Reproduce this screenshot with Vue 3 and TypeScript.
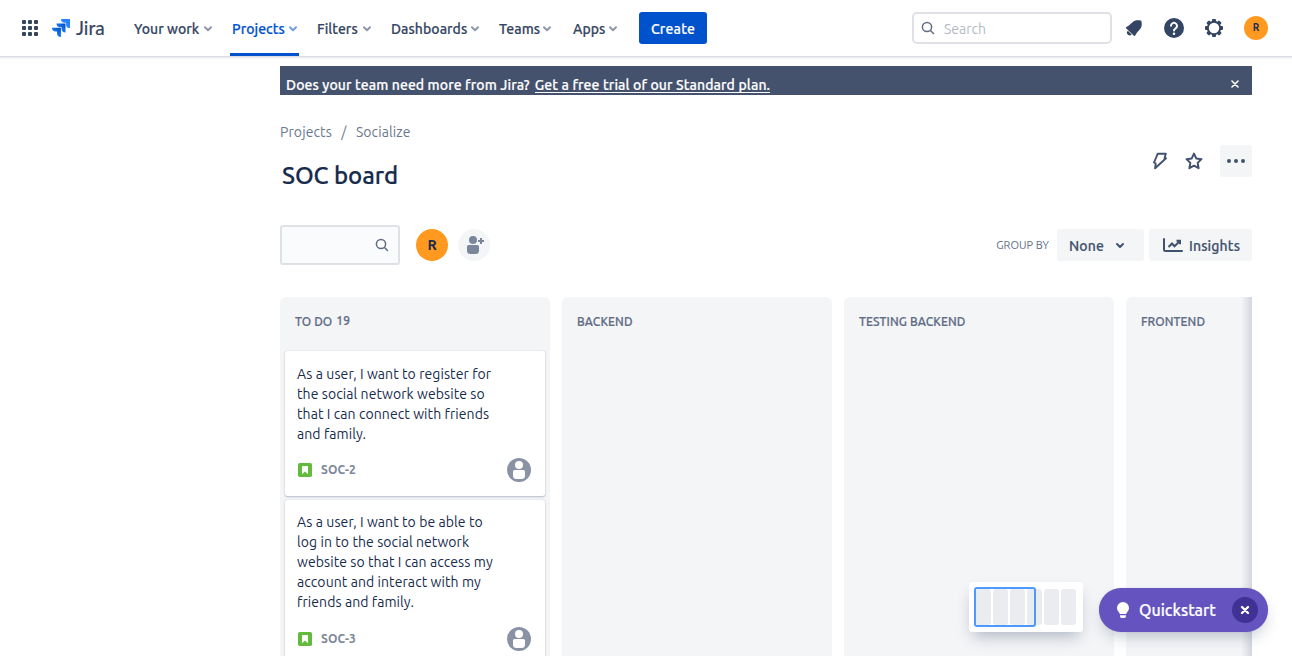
<script setup lang="ts">
interface NavItem {
  key: string
  label: string
  active?: boolean
}
interface Card {
  id: string
  lines: string[]
}
interface Column {
  title: string
  count?: number
  cards: Card[]
}

const navItems: NavItem[] = [
  { key: 'work', label: 'Your work' },
  { key: 'projects', label: 'Projects', active: true },
  { key: 'filters', label: 'Filters' },
  { key: 'dashboards', label: 'Dashboards' },
  { key: 'teams', label: 'Teams' },
  { key: 'apps', label: 'Apps' },
]

const columns: Column[] = [
  {
    title: 'TO DO',
    count: 19,
    cards: [
      {
        id: 'SOC-2',
        lines: [
          'As a user, I want to register for',
          'the social network website so',
          'that I can connect with friends',
          'and family.',
        ],
      },
      {
        id: 'SOC-3',
        lines: [
          'As a user, I want to be able to',
          'log in to the social network',
          'website so that I can access my',
          'account and interact with my',
          'friends and family.',
        ],
      },
    ],
  },
  { title: 'BACKEND', cards: [] },
  { title: 'TESTING BACKEND', cards: [] },
  { title: 'FRONTEND', cards: [] },
]
</script>

<template>
  <div class="page">
    <header class="topbar">
      <svg class="switcher" width="16" height="16" viewBox="0 0 16 16" fill="#344563">
        <template v-for="r in 3" :key="r">
          <rect v-for="c in 3" :key="c" :x="(c - 1) * 6" :y="(r - 1) * 6" width="4" height="4" rx="1" />
        </template>
      </svg>
      <svg class="mark" width="18" height="18" viewBox="0 0 18 18">
        <defs>
          <linearGradient id="jg1" x1="1" y1="0" x2="0.3" y2="0.75">
            <stop offset="0.15" stop-color="#0052cc" />
            <stop offset="1" stop-color="#2684ff" />
          </linearGradient>
        </defs>
        <path d="M0 8.8h8.9v9.2a3.9 3.9 0 0 1-3.9-3.9v-1.5H3.8A3.8 3.8 0 0 1 0 8.8z" fill="url(#jg1)" />
        <path d="M4.5 4.4h9v9.1a3.9 3.9 0 0 1-3.9-3.9V8.2H8.3a3.8 3.8 0 0 1-3.8-3.8z" fill="url(#jg1)" />
        <path d="M9 0h9v9.1a3.9 3.9 0 0 1-3.9-3.9V3.8h-1.3A3.8 3.8 0 0 1 9 0z" fill="#2684ff" />
      </svg>
      <span class="wordmark">Jira</span>
      <nav class="nav">
        <a v-for="item in navItems" :key="item.key" :class="['nav-item', item.key, { active: item.active }]">
          <span>{{ item.label }}</span>
          <svg width="8" height="6" viewBox="0 0 8 6" fill="none" stroke="currentColor" stroke-width="2" stroke-linecap="round" stroke-linejoin="round"><path d="M1 1.2l3 3 3-3" /></svg>
        </a>
      </nav>
      <button class="create">Create</button>
      <div class="search">
        <svg width="14" height="14" viewBox="0 0 14 14" fill="none" stroke="#5e6c84" stroke-width="1.5" stroke-linecap="round"><circle cx="6" cy="6" r="4.6" /><path d="M9.500 9.500l3 3" /></svg>
        <span>Search</span>
      </div>
      <svg class="bell" width="18" height="18" viewBox="0 0 18 18" fill="#344563">
        <path d="M1.300 8.100C4.200 6.700 5.600 5 7.500 3.200 9.800 1 13 .9 16.300 1.700c.9 3.300.7 6.300-1.600 8.900-1.900 2-3.100 3.300-4.500 6-.3.500-.9.500-1.300.1L1.100 9.200c-.4-.4-.3-.9.200-1.100z" />
        <path d="M2.800 11.700l3.900 3.900a2.600 2.600 0 0 1-3.900-3.900z" />
      </svg>
      <svg class="help" width="20" height="20" viewBox="0 0 20 20">
        <circle cx="10" cy="10" r="10" fill="#344563" />
        <path d="M7 7.800a3 3 0 1 1 4.600 2.600c-1 .6-1.600 1-1.600 2.200" fill="none" stroke="#fff" stroke-width="2" stroke-linecap="round" />
        <circle cx="10" cy="15.700" r="1.250" fill="#fff" />
      </svg>
      <svg class="gear" width="20" height="20" viewBox="0 0 20 20">
        <g fill="#344563">
          <rect v-for="n in 8" :key="n" x="8" y="1" width="4" height="4" rx="1" :transform="`rotate(${n * 45} 10 10)`" />
        </g>
        <circle cx="10" cy="10" r="6.200" fill="#fff" stroke="#344563" stroke-width="2" />
      </svg>
      <span class="me">R</span>
    </header>

    <main class="content">
      <div class="banner">
        <span>Does your team need more from Jira?</span>
        <a class="trial">Get a free trial of our Standard plan.</a>
        <svg width="8" height="8" viewBox="0 0 8 8" stroke="#fff" stroke-width="1.600" stroke-linecap="round"><path d="M1 1l6 6M7 1L1 7" /></svg>
      </div>

      <div class="crumbs"><span>Projects</span><span class="slash">/</span><span>Socialize</span></div>

      <div class="heading">
        <h1>SOC board</h1>
        <div class="actions">
          <svg width="16" height="18" viewBox="0 0 16 18" fill="none" stroke="#42526e" stroke-width="1.900" stroke-linejoin="round"><path d="M5.700 1.800H13.800L12.500 6.200H14L3.100 16.300 3.700 11.500 2 10.500z" /></svg>
          <svg width="20" height="20" viewBox="0 0 20 20" fill="none" stroke="#42526e" stroke-width="2" stroke-linejoin="round"><path d="M10 2.600l2.250 4.800 5.250.75-3.850 3.700.95 5.350L10 14.650 5.400 17.200l.95-5.350L2.500 8.150l5.250-.75z" /></svg>
          <button class="more"><i /><i /><i /></button>
        </div>
      </div>

      <div class="toolbar">
        <div class="filter"><svg width="14" height="14" viewBox="0 0 14 14" fill="none" stroke="#5e6c84" stroke-width="1.500" stroke-linecap="round"><circle cx="6" cy="6" r="4.600" /><path d="M9.500 9.500l3 3" /></svg></div>
        <span class="avatar">R</span>
        <span class="add">
          <svg width="20" height="20" viewBox="0 0 20 20" fill="#7a869a">
            <circle cx="8" cy="5" r="4" />
            <path d="M3.500 10h9A1.500 1.500 0 0 1 14 11.500V15.500a3.500 3.500 0 0 1-3.500 3.500h-5A3.500 3.500 0 0 1 2 15.500v-4A1.500 1.500 0 0 1 3.500 10z" />
            <path d="M16 3v6M13 6h6" stroke="#7a869a" stroke-width="2" />
          </svg>
        </span>
        <span class="groupby">GROUP BY</span>
        <button class="btn none"><span>None</span><svg width="10" height="7" viewBox="0 0 10 7" fill="none" stroke="currentColor" stroke-width="2" stroke-linecap="round" stroke-linejoin="round"><path d="M2 2l3 3 3-3" /></svg></button>
        <button class="btn insights">
          <svg width="20" height="15" viewBox="0 0 20 15" fill="none" stroke="currentColor" stroke-width="2" stroke-linecap="round" stroke-linejoin="round"><path d="M1 1v10.500A1.500 1.500 0 0 0 2.500 13H19" /><path d="M5.500 9L9 5.500l2.500 2.700L16.800 3M13.500 2.700H17V6.200" stroke-linecap="butt" stroke-linejoin="miter" /></svg>
          <span>Insights</span>
        </button>
      </div>

      <div class="board">
        <section v-for="col in columns" :key="col.title" class="column">
          <h2><span>{{ col.title }}</span><b v-if="col.count">{{ col.count }}</b></h2>
          <article v-for="card in col.cards" :key="card.id" class="card">
            <p><span v-for="line in card.lines" :key="line">{{ line }}</span></p>
            <footer>
              <svg width="14" height="14" viewBox="0 0 14 14"><rect width="14" height="14" rx="1.800" fill="#63ba3c" /><path d="M4.700 3h4.600a.7.7 0 0 1 .7.700V11.200L7 8.500 4 11.200V3.700a.7.7 0 0 1 .7-.7z" fill="#fff" /></svg>
              <span>{{ card.id }}</span>
              <svg class="person" width="24" height="24" viewBox="0 0 24 24"><circle cx="12" cy="12" r="12" fill="#8993a4" /><circle cx="12" cy="7" r="4" fill="#fff" /><path d="M7.500 12h9a1.500 1.500 0 0 1 1.500 1.500V17.500a3.500 3.500 0 0 1-3.500 3.500h-5A3.500 3.500 0 0 1 6 17.500v-4A1.500 1.500 0 0 1 7.500 12z" fill="#fff" /></svg>
            </footer>
          </article>
        </section>
        <div class="edge" />
      </div>
    </main>

    <div class="minimap">
      <i v-for="n in 6" :key="n" />
      <span class="viewport" />
    </div>

    <div class="quickstart">
      <svg width="14" height="18" viewBox="0 0 14 18" fill="#fff"><path d="M7 1a6 6 0 0 1 6 6c0 2.300-1.500 3.400-2.200 4.700-.3.600-.4 1.300-1 1.300H4.200c-.6 0-.7-.7-1-1.300C2.500 10.400 1 9.300 1 7a6 6 0 0 1 6-6z" /><path d="M4 14.300h6v1a1.700 1.700 0 0 1-1.700 1.700H5.700A1.700 1.700 0 0 1 4 15.300z" /></svg>
      <span>Quickstart</span>
      <button><svg width="10" height="10" viewBox="0 0 10 10" stroke="#fff" stroke-width="2.400" stroke-linecap="round"><path d="M2 2l6 6M8 2L2 8" /></svg></button>
    </div>
  </div>
</template>

<style>
body {
  overflow: hidden;
  background: #fff;
}
</style>

<style scoped>
.page {
  position: relative;
  width: 1292px;
  height: 656px;
  overflow: hidden;
  font-family: 'Ubuntu', 'Noto Sans', sans-serif;
  font-size: 14px;
  line-height: 20px;
  color: #172b4d;
  white-space: nowrap;
}
* { box-sizing: border-box; }
svg { display: block; flex: none; }
button { border: 0; padding: 0; font: inherit; }
.nav-item, .create, .banner, h1, .btn, h2 { -webkit-text-stroke: .2px currentColor; }
.topbar {
  display: flex;
  align-items: center;
  height: 56px;
  padding: 0 24px 0 22px;
  box-shadow: 0 1px 0 #d9dde4, 0 2px 1px #ebedf1, 0 3px 1px #f8f9fa;
}
.mark { margin-left: 14px; }
.wordmark {
  width: 30px;
  margin-left: 6px;
  color: #344563;
  font: 19px/24px 'Lato', sans-serif;
  -webkit-text-stroke: .2px currentColor;
}
.nav { display: flex; height: 56px; margin-left: 26px; }
.nav-item {
  display: flex;
  align-items: center;
  justify-content: space-between;
  height: 56px;
  margin-left: 16px;
  padding: 2px 2px 0;
  color: #344563;
  font-weight: 500;
  letter-spacing: .05px;
}
.nav-item svg { opacity: .55; }
.nav-item.work { width: 82px; margin-left: 0; }
.nav-item.projects { width: 69px; }
.nav-item.filters { width: 58px; }
.nav-item.dashboards { width: 92px; }
.nav-item.teams { width: 56px; }
.nav-item.apps { width: 48px; margin-left: 18px; }
.nav-item.active { color: #0052cc; box-shadow: inset 0 -3px #0052cc; }
.create {
  width: 68px;
  height: 32px;
  margin-left: 20px;
  padding-top: 2px;
  border-radius: 3px;
  background: #0052cc;
  color: #fff;
  font-weight: 500;
  letter-spacing: .2px;
}
.search {
  display: flex;
  align-items: center;
  width: 200px;
  height: 32px;
  margin-left: auto;
  padding: 0 8px 0 7px;
  border: 2px solid #dfe1e6;
  border-radius: 5px;
  color: #b3bac5;
}
.search span { margin: 2px 0 0 9px; }
.bell { margin-left: 13px; }
.help { margin-left: 21px; }
.gear { margin-left: 20px; }
.me, .avatar, .add {
  display: flex;
  flex: none;
  align-items: center;
  justify-content: center;
  border-radius: 50%;
  background: #ff991f;
}
.me {
  width: 24px;
  height: 24px;
  margin-left: 20px;
  font-size: 10px;
  font-weight: 700;
}
.content { width: 972px; margin: 10px 0 0 280px; }
.banner {
  display: flex;
  height: 29px;
  padding: 9px 13px 0 6px;
  background: #44526e;
  color: #fff;
  font-weight: 500;
  letter-spacing: .11px;
}
.trial { height: 18px; margin-left: 5px; border-bottom: 1px solid #fff; letter-spacing: .115px; }
.banner svg { margin: 5px 0 0 auto; }
.crumbs { display: flex; margin-top: 27px; color: #6b778c; letter-spacing: .1px; }
.slash { width: 24px; text-align: center; }
.heading { display: flex; justify-content: space-between; height: 48px; margin-top: 3px; }
h1 { margin: 17px 0 0 2px; font-size: 24px; line-height: 28px; font-weight: 500; letter-spacing: -.1px; }
.actions { display: flex; align-items: center; height: 32px; }
.actions svg + svg { margin-left: 16px; }
.more {
  display: flex;
  align-items: center;
  justify-content: center;
  gap: 3px;
  width: 32px;
  height: 32px;
  margin-left: 16px;
  border-radius: 3px;
  background: #f4f5f7;
}
.more i { width: 4px; height: 4px; border-radius: 50%; background: #42526e; }
.toolbar { display: flex; align-items: center; height: 40px; margin-top: 32px; }
.filter {
  display: flex;
  align-items: center;
  justify-content: flex-end;
  width: 120px;
  height: 40px;
  padding-right: 9px;
  border: 2px solid #dfe1e6;
  border-radius: 3px;
  background: #fafbfc;
}
.avatar { width: 32px; height: 32px; margin-left: 16px; font-weight: 700; }
.add { width: 32px; height: 32px; margin-left: 10px; padding-left: 1px; background: #f4f5f7; }
.groupby { margin-left: auto; color: #5e6c84; font-size: 11px; letter-spacing: .05px; }
.btn {
  display: flex;
  align-items: center;
  height: 32px;
  border-radius: 3px;
  background: #f4f5f7;
  color: #42526e;
  font-weight: 500;
  letter-spacing: .12px;
}
.btn span { padding-top: 2px; }
.none { width: 87px; margin-left: 8px; padding-left: 12px; }
.none svg { margin-left: 11px; }
.insights { width: 103px; margin-left: 5px; padding-left: 14px; }
.insights span { margin-left: 6px; }
.board { position: relative; display: flex; gap: 12px; height: 380px; margin-top: 32px; overflow: hidden; }
.column { flex: none; width: 270px; padding: 0 5px; border-radius: 6px; background: #f4f5f7; }
h2 {
  display: flex;
  height: 54px;
  margin: 0;
  padding: 15px 10px 0;
  color: #5e6c84;
  font-size: 12px;
  font-weight: 500;
  letter-spacing: .1px;
}
h2 b { margin: -1px 0 0 4px; font-weight: 500; }
.card {
  margin-bottom: 4px;
  padding: 13px 14px 14px 12px;
  border-radius: 2px;
  background: #fff;
  box-shadow: 0 1px 2px rgba(9, 30, 66, .25), 0 0 1px rgba(9, 30, 66, .25);
}
.card p { margin: 0; letter-spacing: .08px; }
.card + .card p { margin: -1px 0 15px; }
.card p span { display: block; }
.card footer { display: flex; align-items: center; height: 24px; margin-top: 14px; }
.card + .card footer { margin-top: 0; }
.card footer svg:first-child { margin-left: 1px; }
.card footer span { margin-left: 9px; color: #7a869a; font-size: 12px; font-weight: 600; letter-spacing: .1px; }
.person { margin-left: auto; }
.edge {
  position: absolute;
  top: 0;
  right: 0;
  width: 11px;
  height: 380px;
  background: linear-gradient(to left, rgba(9, 30, 66, .14), rgba(9, 30, 66, 0));
}
.minimap {
  position: absolute;
  left: 969px;
  top: 582px;
  display: flex;
  gap: 2px;
  width: 114px;
  height: 50px;
  padding: 7px;
  border-radius: 3px;
  background: #fff;
  box-shadow: 0 8px 16px -4px rgba(9, 30, 66, .3);
}
.minimap i { width: 15px; height: 36px; border-radius: 3px; background: #ebecf0; }
.viewport {
  position: absolute;
  left: 5px;
  top: 5px;
  width: 62px;
  height: 40px;
  border: 2px solid #4c9aff;
  border-radius: 3px;
}
.quickstart {
  position: absolute;
  left: 1099px;
  top: 588px;
  display: flex;
  align-items: center;
  width: 169px;
  height: 44px;
  padding: 0 10px 0 17px;
  border-radius: 22px;
  background: #6554c0;
  color: #fff;
  font-size: 16px;
  font-weight: 500;
  box-shadow: 0 8px 16px -4px rgba(9, 30, 66, .25), 0 0 1px rgba(9, 30, 66, .3);
}
.quickstart > span { margin-left: 9px; -webkit-text-stroke: .2px currentColor; }
.quickstart button {
  display: flex;
  align-items: center;
  justify-content: center;
  width: 26px;
  height: 26px;
  margin-left: auto;
  border-radius: 50%;
  background: #403294;
}
</style>
